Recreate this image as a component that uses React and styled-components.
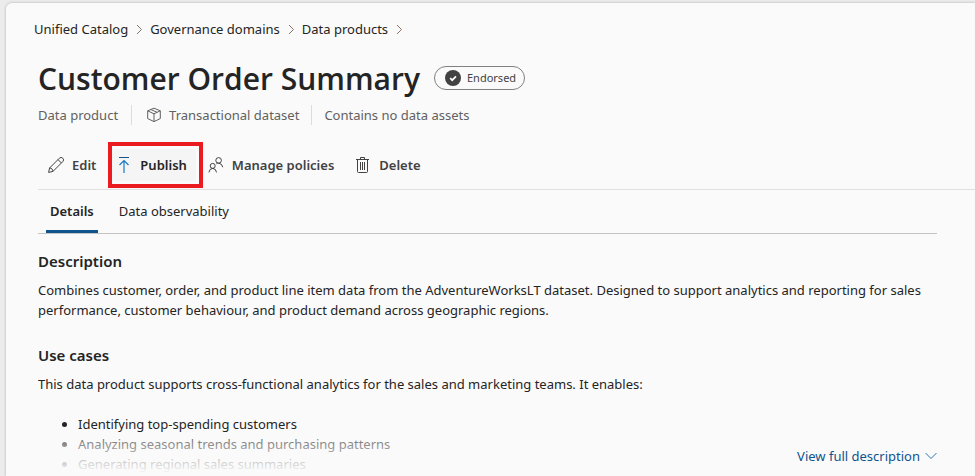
import React from "react";
import styled, { createGlobalStyle, css } from "styled-components";

const GlobalStyle = createGlobalStyle`
  *, *::before, *::after { box-sizing: border-box; }
  html { overflow: hidden; }
  body {
    margin: 0;
    background: #ececec;
    color: #242424;
    font: 400 13px/20px "Noto Sans", "Open Sans", sans-serif;
  }
  h1, h2, p, ul, ol { margin: 0; padding: 0; }
  button { font: inherit; color: inherit; background: none; border: 0; padding: 0; cursor: pointer; }
`;

const Page = styled.div`
  min-height: 100vh;
  padding: 3px 0 0 6px;
`;

const Panel = styled.main`
  min-height: calc(100vh - 3px);
  padding: 16px 0 0 32px;
  background: #fafafa;
  border-top-left-radius: 6px;
  box-shadow: 0 0 3px rgba(0, 0, 0, 0.26);
`;

const Breadcrumb = styled.ol`
  display: flex;
  flex-wrap: wrap;
  list-style: none;
  margin-left: -4px;
`;

const Crumb = styled.li`
  display: flex;
  align-items: center;
  gap: 8px;
  margin-right: 7px;

  a { color: inherit; text-decoration: none; }
`;

const TitleRow = styled.div`
  display: flex;
  align-items: center;
  gap: 14px;
  margin-top: 18px;
`;

const Title = styled.h1`
  padding-top: 2px;
  font-family: "Open Sans", "Noto Sans", sans-serif;
  font-size: 30px;
  line-height: 40px;
  font-weight: 600;
`;

const Badge = styled.span`
  display: flex;
  align-items: center;
  gap: 6px;
  height: 24px;
  padding: 0 8px 0 10px;
  border: 1px solid #808080;
  border-radius: 12px;
  color: #424242;
  font-size: 11px;
`;

const Meta = styled.div`
  display: flex;
  margin-top: 6px;
  color: #616161;
`;

const MetaItem = styled.span`
  display: flex;
  align-items: center;
  gap: 8px;
  padding: 0 12px;

  &:first-child { padding: 0 13px 0 0; }
  & + & { border-left: 1px solid #dcdcdc; }
  svg { margin-left: 3px; }
`;

const Toolbar = styled.div`
  display: flex;
  align-items: center;
  gap: 10px;
  margin-top: 16px;
  padding: 8px 0 8px 4px;
  border-bottom: 1px solid #e0e0e0;
`;

const ToolButton = styled.button`
  position: relative;
  display: flex;
  align-items: center;
  gap: 8px;
  height: 32px;
  padding: 0 6px;
  border-radius: 4px;
  color: #424242;
  font-weight: 600;

  ${(p) => p.$active && css`
    gap: 10px;
    margin-right: -4px;
    padding-right: 9px;
    background: #f5f5f5;
    color: #242424;
  `}
`;

const Highlight = styled.span`
  position: absolute;
  inset: -7px -7px -7px -4px;
  border: 4px solid #ea1c1f;
  pointer-events: none;
`;

const Content = styled.div`
  margin-right: 38px;
`;

const Tabs = styled.div`
  display: flex;
  gap: 17px;
  padding-left: 8px;
  border-bottom: 1px solid #c4c4c4;
`;

const Tab = styled.button`
  height: 43px;
  padding: 1px 4px 0;
  line-height: 20px;
  border-bottom: 3px solid transparent;

  &[aria-selected="true"] {
    font-weight: 600;
    border-image: linear-gradient(#0f548c, #0f548c) 1;
  }
`;

const Description = styled.section`
  position: relative;
  height: calc(100vh - 234px);
  min-height: 242px;
  padding-top: 16px;
  overflow: hidden;
`;

const Heading = styled.h2`
  margin-bottom: 8px;
  font-size: 15px;
  line-height: 22px;
  font-weight: 600;

  p + & { margin-top: 24px; }
`;

const Bullets = styled.ul`
  margin-top: 20px;
  padding-left: 40px;
`;

const Fade = styled.div`
  position: absolute;
  right: 0;
  bottom: 0;
  left: 0;
  display: flex;
  align-items: flex-end;
  justify-content: flex-end;
  height: 42px;
  padding-bottom: 10px;
  background: linear-gradient(rgba(250, 250, 250, 0.3), #fafafa 40px);
`;

const ExpandButton = styled.button`
  display: flex;
  align-items: center;
  gap: 5px;
  color: #0f548c;
`;

const Chevron = () => (
  <svg width="7" height="11" viewBox="0 0 7 11" fill="none" stroke="#8c7264" aria-hidden="true">
    <path d="M1 1l4.5 4.5L1 10" />
  </svg>
);

const ChevronDown = () => (
  <svg width="12" height="8" viewBox="0 0 12 8" fill="none" stroke="#2b78b4" aria-hidden="true">
    <path d="M.5 1L6 6.5 11.5 1" />
  </svg>
);

const CheckBadge = () => (
  <svg width="16" height="16" viewBox="0 0 16 16" aria-hidden="true">
    <circle cx="8" cy="8" r="8" fill="#424242" />
    <path d="M5.2 8.2l2 2 3.8-3.8" fill="none" stroke="#fff" strokeWidth="1.7" />
  </svg>
);

const Cube = () => (
  <svg width="14" height="16" viewBox="0 0 14 16" fill="none" stroke="#616161" strokeLinejoin="round" aria-hidden="true">
    <path d="M7 1.2l6.3 2.6v7.8L7 14.6.7 11.6V3.8zM.7 3.8L7 6.8l6.3-3M7 6.8v7.8M3.8 2.5l6.3 2.8" />
  </svg>
);

const Pencil = () => (
  <svg width="16" height="16" viewBox="0 0 16 16" fill="none" stroke="#424242" strokeLinejoin="round" aria-hidden="true">
    <path d="M.6 15.4l1-4.4L11.4 1.2a2.2 2.2 0 0 1 3.4 3.4L5 14.4zM10 2.6L13.4 6M1.6 11c1.8 0 3.4 1.6 3.4 3.4" />
  </svg>
);

const Upload = () => (
  <svg width="12" height="16" viewBox="0 0 12 16" fill="none" aria-hidden="true">
    <path d="M1 .5h10" stroke="#0f548c" />
    <path d="M6 16V3.5M1.5 8L6 3.5 10.5 8" stroke="#1979c4" strokeWidth="1.2" />
  </svg>
);

const People = () => (
  <svg width="16" height="16" viewBox="0 0 16 16" fill="none" stroke="#424242" aria-hidden="true">
    <circle cx="10.6" cy="3.4" r="2.8" />
    <path d="M8.4 6.8Q9.4 6.1 10.6 6.2Q14 6.4 14.8 10.2" />
    <circle cx="4.7" cy="8.9" r="2.5" />
    <path d="M.9 15.4Q1.4 11.5 4.7 11.4Q8 11.5 8.5 15.4" />
  </svg>
);

const Trash = () => (
  <svg width="15" height="16" viewBox="0 0 15 16" fill="none" stroke="#424242" aria-hidden="true">
    <path d="M0 2.5h13M4.5 2.5v-2h4v2M1.5 2.5v12q0 1 1 1h8q1 0 1-1v-12M4.5 5v8M6.5 5v8M8.5 5v8" />
  </svg>
);

const crumbs = ["Unified Catalog", "Governance domains", "Data products"];
const bullets = [
  "Identifying top-spending customers",
  "Analyzing seasonal trends and purchasing patterns",
  "Generating regional sales summaries",
];

export default function App() {
  return (
    <Page>
      <GlobalStyle />
      <Panel>
        <nav aria-label="Breadcrumb">
          <Breadcrumb>
            {crumbs.map((name) => (
              <Crumb key={name}>
                <a href="#">{name}</a>
                <Chevron />
              </Crumb>
            ))}
          </Breadcrumb>
        </nav>
        <TitleRow>
          <Title>Customer Order Summary</Title>
          <Badge><CheckBadge />Endorsed</Badge>
        </TitleRow>
        <Meta>
          <MetaItem>Data product</MetaItem>
          <MetaItem><Cube />Transactional dataset</MetaItem>
          <MetaItem>Contains no data assets</MetaItem>
        </Meta>
        <Toolbar role="toolbar">
          <ToolButton><Pencil />Edit</ToolButton>
          <ToolButton $active><Upload />Publish<Highlight /></ToolButton>
          <ToolButton><People />Manage policies</ToolButton>
          <ToolButton><Trash />Delete</ToolButton>
        </Toolbar>
        <Content>
          <Tabs role="tablist">
            <Tab role="tab" aria-selected="true">Details</Tab>
            <Tab role="tab" aria-selected="false">Data observability</Tab>
          </Tabs>
          <Description>
            <Heading>Description</Heading>
            <p>
              Combines customer, order, and product line item data from the AdventureWorksLT dataset. Designed to
              support analytics and reporting for sales performance, customer behaviour, and product demand across
              geographic regions.
            </p>
            <Heading>Use cases</Heading>
            <p>This data product supports cross-functional analytics for the sales and marketing teams. It enables:</p>
            <Bullets>
              {bullets.map((text) => <li key={text}>{text}</li>)}
            </Bullets>
            <Fade>
              <ExpandButton>View full description<ChevronDown /></ExpandButton>
            </Fade>
          </Description>
        </Content>
      </Panel>
    </Page>
  );
}
